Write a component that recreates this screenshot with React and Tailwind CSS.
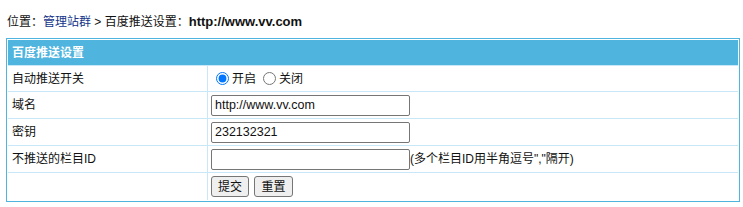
import { useState } from 'react';

const font = { fontFamily: '"Liberation Sans", "Noto Sans CJK SC", sans-serif' };

function Row({ label, children, h = 'h-[27px]' }) {
    return (
        <div className={`grid grid-cols-[200px_1fr] border-t border-[#c8e8f8] ${h}`}>
            <div className="flex items-center border-r border-[#c8e8f8] pl-[4px]">{label}</div>
            <div className="flex items-center pl-[3px]">{children}</div>
        </div>
    );
}

export default function App() {
    const [push, setPush] = useState('on');

    return (
        <div className="w-[743px] h-[207px] bg-white text-[12px] text-[#111]" style={font}>
            <div className="pl-[7px] pt-[14px] leading-[16px] mb-[8px]">
                位置：<a href="#" className="text-[#13348a]">管理站群</a> &gt; 百度推送设置：<b className="text-[13px]">http://www.vv.com</b>
            </div>

            <div className="ml-[6px] w-[734px] border border-[#4fb4de] p-px">
                <div className="h-[25px] bg-[#4fb4de] flex items-center pl-[4px] font-bold text-white">
                    百度推送设置
                </div>

                <Row label="自动推送开关" h="h-[26px]">
                    <label className="flex items-center">
                        <input type="radio" name="push" checked={push === 'on'} onChange={() => setPush('on')} className="m-0 ml-[5px] mr-[3px] w-[13px] h-[13px]" />
                        开启
                    </label>
                    <label className="flex items-center ml-[2px]">
                        <input type="radio" name="push" checked={push === 'off'} onChange={() => setPush('off')} className="m-0 ml-[5px] mr-[3px] w-[13px] h-[13px]" />
                        关闭
                    </label>
                </Row>

                <Row label="域名">
                    <input type="text" defaultValue="http://www.vv.com" className="w-[199px] h-[21px] border border-[#767676] rounded-[2px] px-[3px] text-[12.5px] outline-none" style={font} />
                </Row>

                <Row label="密钥">
                    <input type="text" defaultValue="232132321" className="w-[199px] h-[21px] border border-[#767676] rounded-[2px] px-[3px] text-[12.5px] outline-none" style={font} />
                </Row>

                <Row label="不推送的栏目ID">
                    <input type="text" className="w-[199px] h-[21px] border border-[#767676] rounded-[2px] px-[3px] text-[12.5px] outline-none" style={font} />
                    <span>(多个栏目ID用半角逗号","隔开)</span>
                </Row>

                <Row label="" h="h-[28px]">
                    <div className="flex gap-[5px]">
                        <button className="w-[38px] h-[21px] bg-[#efefef] border border-[#767676] rounded-[3px] text-[12px]">提交</button>
                        <button className="w-[39px] h-[21px] bg-[#efefef] border border-[#767676] rounded-[3px] text-[12px]">重置</button>
                    </div>
                </Row>
            </div>
        </div>
    );
}
